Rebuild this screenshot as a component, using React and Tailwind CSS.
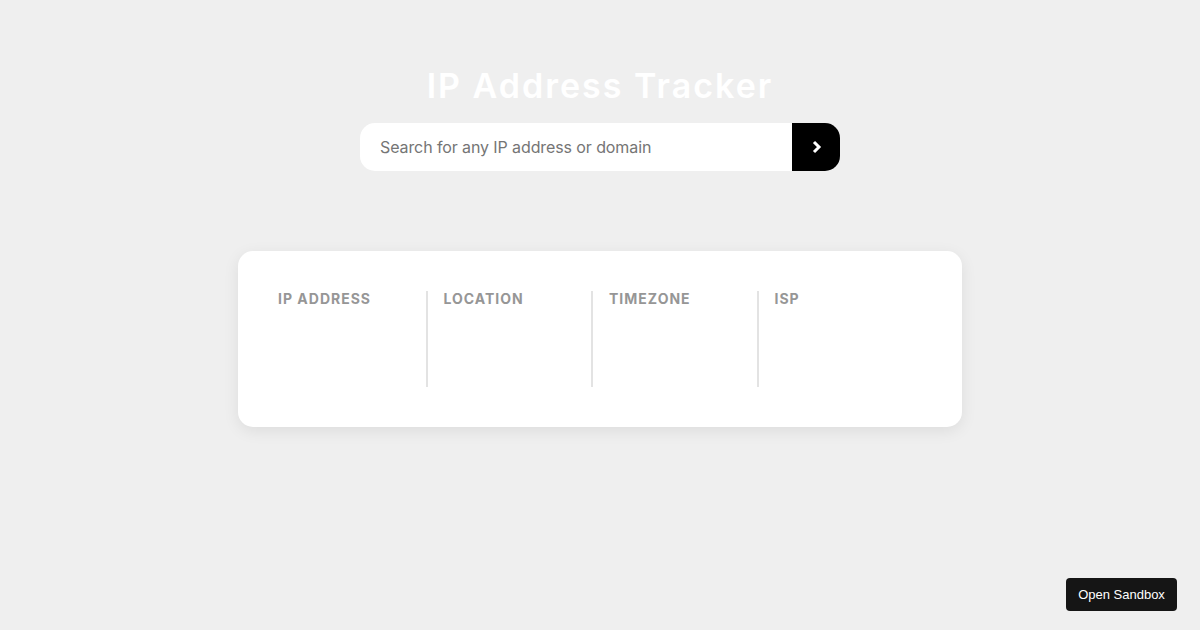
import React from "react";

export default function App() {
  const cols = ["IP ADDRESS", "LOCATION", "TIMEZONE", "ISP"];
  return (
    <div className="relative min-h-[630px] w-full bg-[#efefef]" style={{ fontFamily: "Inter, 'Open Sans', sans-serif" }}>
      <div className="flex flex-col items-center pt-[62px]">
        <h1 className="text-[34px] font-semibold leading-[48px] tracking-[2px] text-white">IP Address Tracker</h1>
        <div className="mt-[13px] flex h-12 w-[480px]">
          <div className="flex flex-1 items-center rounded-l-[15px] bg-white pl-5 text-[16px] tracking-[-0.1px] text-[#757575]">
            Search for any IP address or domain
          </div>
          <button className="flex w-12 items-center justify-center rounded-r-[15px] bg-black">
            <svg width="11" height="14" viewBox="0 0 11 14" fill="none">
              <path d="M3 2l5 5-5 5" stroke="white" strokeWidth="3" />
            </svg>
          </button>
        </div>
        <div className="mt-[80px] grid w-[724px] grid-cols-4 rounded-[15px] bg-white py-10 pl-[22px] pr-[40px] shadow-[0_4px_16px_rgba(0,0,0,0.08)]">
          {cols.map((c, i) => (
            <div key={c} className={`h-24 ${i > 0 ? "border-l-2 border-[#e3e3e3] pl-4" : "pl-[18px]"}`}>
              <div className="text-[14px] font-bold leading-4 tracking-[1px] text-[#969696]">{c}</div>
            </div>
          ))}
        </div>
      </div>
      <div className="absolute bottom-[19px] right-[23px] flex h-[33px] w-[111px] items-center justify-center rounded-[4px] bg-[#151515] text-[13px] text-white" style={{ fontFamily: "'Liberation Sans', Arial, sans-serif" }}>
        Open Sandbox
      </div>
    </div>
  );
}
